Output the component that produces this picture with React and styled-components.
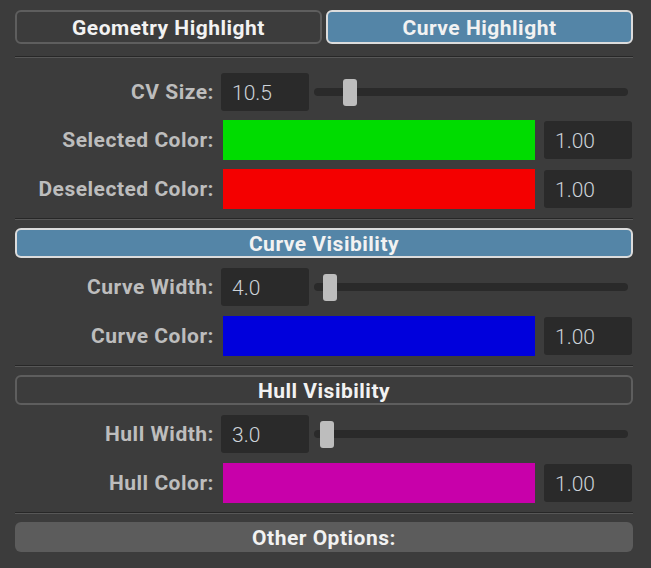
import React from "react";
import styled, { createGlobalStyle } from "styled-components";

const Global = createGlobalStyle`
  html, body { margin: 0; padding: 0; background: #3c3c3c; }
  body { font-family: Roboto, "Liberation Sans", sans-serif; }
`;

const Panel = styled.div`
  width: 651px;
  height: 568px;
  box-sizing: border-box;
  padding: 10px 18px 0 15px;
  background: #3c3c3c;
  display: flex;
  flex-direction: column;
`;

const Tabs = styled.div`
  display: grid;
  grid-template-columns: 1fr 1fr;
  gap: 4px;
  height: 34px;
`;

const Button = styled.div`
  box-sizing: border-box;
  height: ${(p) => p.$h || 30}px;
  padding-top: 2px;
  border-radius: 6px;
  border: 2px solid ${(p) => (p.$active ? "#dcdcdc" : p.$plain ? "transparent" : "#5e5e5e")};
  background: ${(p) => (p.$active ? "#5485a7" : p.$plain ? "#5c5c5c" : "#3c3c3c")};
  color: #f2f2f2;
  font-weight: 700;
  font-size: 21px;
  letter-spacing: 0.5px;
  display: flex;
  align-items: center;
  justify-content: center;
  line-height: 1;
`;

const Separator = styled.div`
  height: 0;
  border-top: 1px solid #272727;
  border-bottom: 1px solid #575757;
  margin: ${(p) => p.$top}px 0 ${(p) => p.$bottom}px;
`;

const Group = styled.div`
  display: flex;
  flex-direction: column;
  gap: ${(p) => p.$gap}px;
  margin-top: ${(p) => p.$mt || 0}px;
`;

const Row = styled.div`
  display: grid;
  grid-template-columns: 199px 1fr;
  column-gap: 7px;
  align-items: center;
  height: ${(p) => p.$h}px;
`;

const Label = styled.div`
  text-align: right;
  font-weight: 700;
  font-size: 21px;
  letter-spacing: 0.5px;
  color: #bdbdbd;
  white-space: nowrap;
`;

const Control = styled.div`
  display: flex;
  align-items: center;
  height: 100%;
`;

const NumBox = styled.div`
  box-sizing: border-box;
  width: 88px;
  height: 38px;
  flex: none;
  background: #2a2a2a;
  border-radius: 3px;
  color: #cdd3d9;
  font-size: 21px;
  font-weight: 300;
  padding-left: 11px;
  padding-top: 1px;
  display: flex;
  align-items: center;
`;

const Track = styled.div`
  position: relative;
  flex: 1;
  height: 8px;
  margin: 0 5px 0 5px;
  background: #2a2a2a;
  border-radius: 4px;
`;

const Handle = styled.div`
  position: absolute;
  top: -9px;
  width: 14px;
  height: 27px;
  background: #bdbdbd;
  border-radius: 3px;
`;

const Swatch = styled.div`
  flex: 1;
  height: 40px;
  margin-left: 2px;
  margin-right: 9px;
  background: ${(p) => p.$color};
`;

const ValueBox = styled(NumBox)`
  margin-right: 1px;
`;

function SliderRow({ label, value }) {
  const min = 1;
  const max = 100;
  const frac = (value - min) / (max - min);
  return (
    <Row $h={38}>
      <Label>{label}</Label>
      <Control>
        <NumBox>{value.toFixed(1)}</NumBox>
        <Track>
          <Handle style={{ left: `calc(${frac} * (100% - 14px))` }} />
        </Track>
      </Control>
    </Row>
  );
}

function ColorRow({ label, color }) {
  return (
    <Row $h={40}>
      <Label>{label}</Label>
      <Control>
        <Swatch $color={color} />
        <ValueBox>1.00</ValueBox>
      </Control>
    </Row>
  );
}

export default function App() {
  return (
    <>
      <Global />
      <Panel>
        <Tabs>
          <Button $h={34}>Geometry Highlight</Button>
          <Button $h={34} $active>
            Curve Highlight
          </Button>
        </Tabs>
        <Separator $top={12} $bottom={15} />
        <Group $gap={9}>
          <SliderRow label="CV Size:" value={10.5} />
          <ColorRow label="Selected Color:" color="#00dc00" />
          <ColorRow label="Deselected Color:" color="#f40000" />
        </Group>
        <Separator $top={9} $bottom={8} />
        <Button $active>Curve Visibility</Button>
        <Group $gap={10} $mt={10}>
          <SliderRow label="Curve Width:" value={4.0} />
          <ColorRow label="Curve Color:" color="#0000dc" />
        </Group>
        <Separator $top={9} $bottom={8} />
        <Button>Hull Visibility</Button>
        <Group $gap={10} $mt={10}>
          <SliderRow label="Hull Width:" value={3.0} />
          <ColorRow label="Hull Color:" color="#c800aa" />
        </Group>
        <Separator $top={9} $bottom={8} />
        <Button $plain>Other Options:</Button>
      </Panel>
    </>
  );
}
